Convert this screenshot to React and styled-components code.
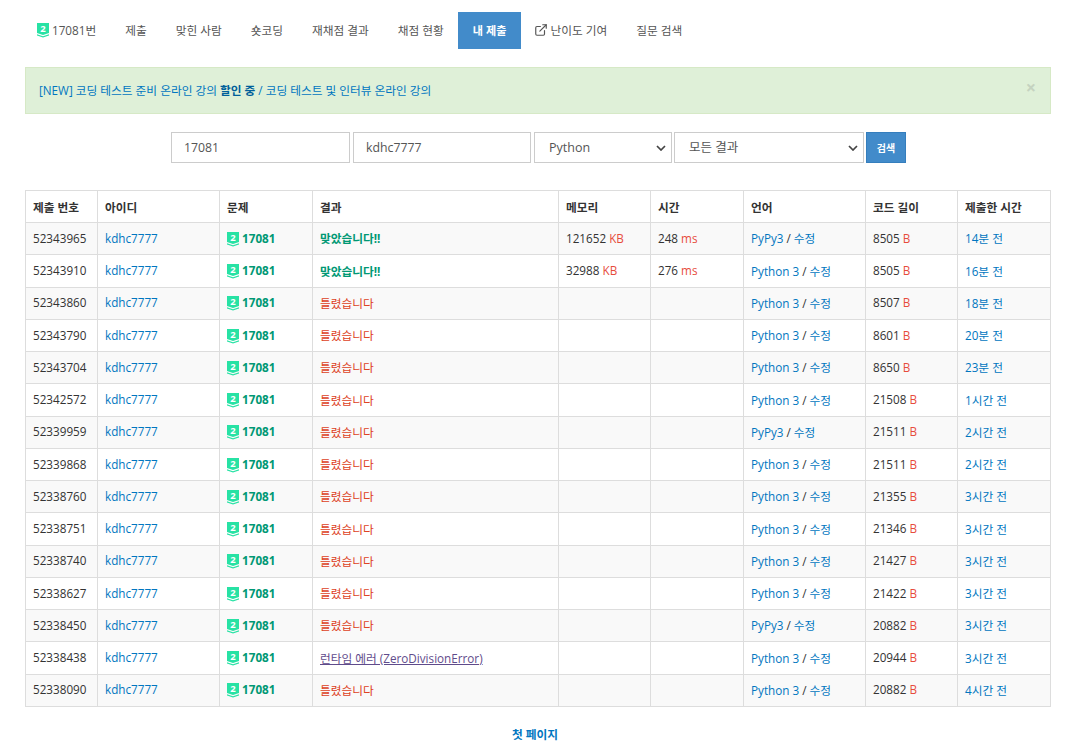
import React from "react";
import styled, { createGlobalStyle } from "styled-components";
import { ExternalLink } from "lucide-react";

const GlobalStyle = createGlobalStyle`
  html, body { margin: 0; padding: 0; background: #fff; }
  body {
    font-family: "Open Sans", "Noto Sans CJK KR", sans-serif;
    font-size: 11.7px;
    color: #333;
  }
`;

const rows = [
  ["52343965", "ac", "121652", "248", "PyPy3", "8505", "14분 전"],
  ["52343910", "ac", "32988", "276", "Python 3", "8505", "16분 전"],
  ["52343860", "wa", "", "", "Python 3", "8507", "18분 전"],
  ["52343790", "wa", "", "", "Python 3", "8601", "20분 전"],
  ["52343704", "wa", "", "", "Python 3", "8650", "23분 전"],
  ["52342572", "wa", "", "", "Python 3", "21508", "1시간 전"],
  ["52339959", "wa", "", "", "PyPy3", "21511", "2시간 전"],
  ["52339868", "wa", "", "", "Python 3", "21511", "2시간 전"],
  ["52338760", "wa", "", "", "Python 3", "21355", "3시간 전"],
  ["52338751", "wa", "", "", "Python 3", "21346", "3시간 전"],
  ["52338740", "wa", "", "", "Python 3", "21427", "3시간 전"],
  ["52338627", "wa", "", "", "Python 3", "21422", "3시간 전"],
  ["52338450", "wa", "", "", "PyPy3", "20882", "3시간 전"],
  ["52338438", "re", "", "", "Python 3", "20944", "3시간 전"],
  ["52338090", "wa", "", "", "Python 3", "20882", "4시간 전"],
];

const columns = [
  ["제출 번호", 72],
  ["아이디", 122],
  ["문제", 93],
  ["결과", 246],
  ["메모리", 92],
  ["시간", 93],
  ["언어", 122],
  ["코드 길이", 92],
  ["제출한 시간", 93],
];

const TierIcon = () => (
  <TierSvg viewBox="0 0 12 15" width="12" height="15">
    <path d="M0 0h12v10l-6 2-6-2z" fill="#27e2a4" />
    <path d="M0 11.3l6 2 6-2v1.2l-6 2-6-2z" fill="#27e2a4" />
    <text x="6" y="9" textAnchor="middle" fontSize="9.5" fontWeight="700" fill="#fff" fontFamily="Open Sans, sans-serif">2</text>
  </TierSvg>
);

const App = () => {
  return (
    <Page>
      <GlobalStyle />
      <Nav>
        <NavItem><TierIcon /> 17081번</NavItem>
        <NavItem>제출</NavItem>
        <NavItem>맞힌 사람</NavItem>
        <NavItem>숏코딩</NavItem>
        <NavItem>재채점 결과</NavItem>
        <NavItem>채점 현황</NavItem>
        <NavItem $active>내 제출</NavItem>
        <NavItem><LinkIcon size={14} strokeWidth={2} /> 난이도 기여</NavItem>
        <NavItem>질문 검색</NavItem>
      </Nav>

      <Alert>
        <AlertText>
          [NEW] 코딩 테스트 준비 온라인 강의 <strong>할인 중</strong> / 코딩 테스트 및 인터뷰 온라인 강의
        </AlertText>
        <Close>×</Close>
      </Alert>

      <SearchForm>
        <Input $width={179} defaultValue="17081" />
        <Input $width={178} defaultValue="kdhc7777" />
        <Select $width={138} defaultValue="Python">
          <option>Python</option>
        </Select>
        <Select $width={190} defaultValue="모든 결과">
          <option>모든 결과</option>
        </Select>
        <SearchButton type="button">검색</SearchButton>
      </SearchForm>

      <Table>
        <colgroup>
          {columns.map(([name, width]) => <col key={name} style={{ width }} />)}
        </colgroup>
        <thead>
          <tr>
            {columns.map(([name]) => <Th key={name}>{name}</Th>)}
          </tr>
        </thead>
        <tbody>
          {rows.map(([id, result, memory, time, lang, len, ago]) => (
            <Row key={id}>
              <Td>{id}</Td>
              <Td><Blue>kdhc7777</Blue></Td>
              <Td><Problem><TierIcon /> 17081</Problem></Td>
              <Td>
                {result === "ac" && <Accepted>맞았습니다!!</Accepted>}
                {result === "wa" && <Wrong>틀렸습니다</Wrong>}
                {result === "re" && <RuntimeError>런타임 에러 (ZeroDivisionError)</RuntimeError>}
              </Td>
              <Td>{memory && <>{memory} <Unit>KB</Unit></>}</Td>
              <Td>{time && <>{time} <Unit>ms</Unit></>}</Td>
              <Td><Blue>{lang}</Blue> / <Blue>수정</Blue></Td>
              <Td>{len} <Unit>B</Unit></Td>
              <Td><Blue>{ago}</Blue></Td>
            </Row>
          ))}
        </tbody>
      </Table>

      <Pager>첫 페이지</Pager>
    </Page>
  );
};

export default App;

const Page = styled.div`
  width: 1026px;
  margin: 0 0 0 25px;
  padding: 12px 0 0;
`;

const Nav = styled.div`
  display: flex;
  height: 37px;
`;

const NavItem = styled.div`
  display: flex;
  align-items: center;
  gap: 3px;
  box-sizing: border-box;
  padding: 0 14.5px 2px;
  font-size: ${(p) => (p.$active ? "11.1px" : "11.7px")};
  white-space: nowrap;
  color: ${(p) => (p.$active ? "#fff" : "#555")};
  background: ${(p) => (p.$active ? "#428bca" : "transparent")};
  font-weight: ${(p) => (p.$active ? 700 : 400)};
  &:first-child { padding-left: 12px; }
`;

const LinkIcon = styled(ExternalLink)`
  margin: 0 -1px;
`;

const TierSvg = styled.svg`
  flex: none;
  margin: -3px 0 -5px;
  vertical-align: 1px;
`;

const Alert = styled.div`
  display: flex;
  align-items: center;
  justify-content: space-between;
  box-sizing: border-box;
  height: 47px;
  margin-top: 18px;
  padding: 0 14px 2px 13px;
  background: #dff0d8;
  border: 1px solid #d6e9c6;
`;

const AlertText = styled.div`
  font-size: 11.7px;
  color: #0076c0;
  strong { font-weight: 700; color: #005f9a; }
`;

const Close = styled.span`
  font-size: 18px;
  font-weight: 700;
  color: #c5d3c0;
  margin: -6px 0 0;
`;

const SearchForm = styled.div`
  display: flex;
  justify-content: center;
  gap: 3px;
  margin-top: 18px;
  height: 31px;
  padding-left: 1px;
`;

const Input = styled.input`
  box-sizing: border-box;
  width: ${(p) => p.$width}px;
  height: 31px;
  padding: 0 12px;
  border: 1px solid #ccc;
  background: #fff;
  font: 12.3px "Open Sans", "Noto Sans CJK KR", sans-serif;
  color: #555;
  outline: none;
`;

const Select = styled.select`
  box-sizing: border-box;
  width: ${(p) => p.$width}px;
  height: 31px;
  padding: 0 0 0 14px;
  border: 1px solid #ccc;
  background: #fff url("data:image/svg+xml,%3Csvg xmlns='http://www.w3.org/2000/svg' width='10' height='6'%3E%3Cpath d='M1 1l4 4 4-4' fill='none' stroke='%23444' stroke-width='1.7'/%3E%3C/svg%3E") no-repeat right 5px center;
  appearance: none;
  font: 12.5px "Open Sans", "Noto Sans CJK KR", sans-serif;
  color: #555;
  outline: none;
  & + & { margin-left: -1px; }
`;

const SearchButton = styled.button`
  box-sizing: border-box;
  width: 40px;
  height: 31px;
  margin-left: -1px;
  padding: 0;
  background: #428bca;
  border: 1px solid #357ebd;
  color: #fff;
  font: 700 10px "Open Sans", "Noto Sans CJK KR", sans-serif;
`;

const Table = styled.table`
  width: 1025px;
  table-layout: fixed;
  border-collapse: collapse;
  margin-top: 27px;
  font-size: 11.7px;
`;

const Th = styled.th`
  height: 31px;
  padding: 0 7px;
  border: 1px solid #ddd;
  text-align: left;
  font-weight: 700;
  font-size: 11.7px;
  color: #333;
  white-space: nowrap;
`;

const Row = styled.tr`
  height: 32.25px;
  &:nth-child(odd) { background: #f9f9f9; }
`;

const Td = styled.td`
  padding: 0 7px 1.5px;
  border: 1px solid #ddd;
  white-space: nowrap;
  color: #333;
`;

const Blue = styled.span`
  color: #0076c0;
`;

const Problem = styled.span`
  font-weight: 700;
  color: #009874;
`;

const Accepted = styled.span`
  font-weight: 700;
  color: #009874;
`;

const Wrong = styled.span`
  color: #dd4124;
`;

const RuntimeError = styled.span`
  color: #5f4b8b;
  text-decoration: underline;
`;

const Unit = styled.span`
  color: #e74c3c;
`;

const Pager = styled.div`
  margin-top: 18px;
  padding-right: 6px;
  text-align: center;
  font-size: 11.7px;
  font-weight: 700;
  color: #0076c0;
`;
